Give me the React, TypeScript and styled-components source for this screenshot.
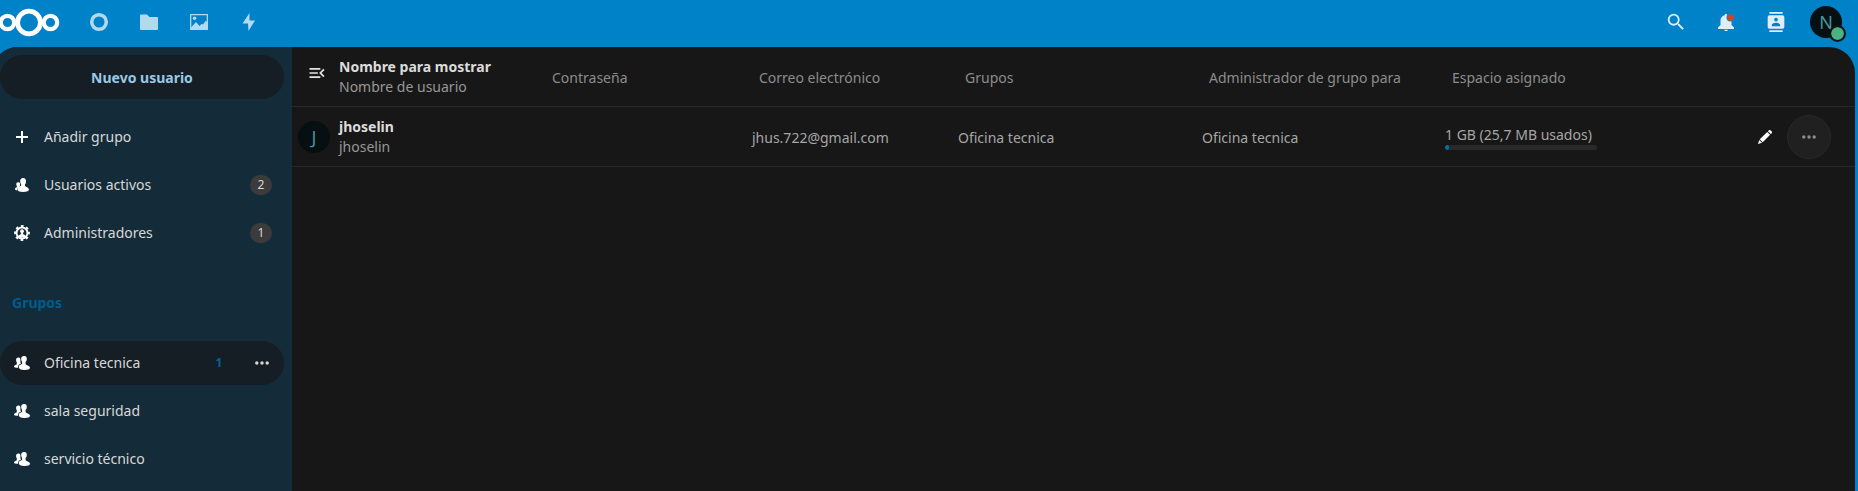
import React from 'react';
import styled, { createGlobalStyle } from 'styled-components';

const GlobalStyle = createGlobalStyle`
  *, *::before, *::after { box-sizing: border-box; }
  body {
    margin: 0;
    background: #0082c9;
    color: #d8d8d8;
    font: 14px/20px "Noto Sans", "Open Sans", sans-serif;
  }
  button { font: inherit; color: inherit; border: 0; padding: 0; background: none; cursor: pointer; }
  a { color: inherit; text-decoration: none; }
`;

const Page = styled.div`
  display: flex;
  flex-direction: column;
  min-height: 100vh;
`;

const Header = styled.header`
  display: flex;
  align-items: center;
  justify-content: space-between;
  padding: 0 7px 3px 0;
`;

const HeaderGroup = styled.nav`
  display: flex;
  align-items: center;
  height: 44px;
`;

const LogoLink = styled.a`
  display: flex;
  width: 74px;
`;

const AppLink = styled.a`
  display: flex;
  justify-content: center;
  width: 50px;
  opacity: 0.7;
`;

const HeaderButton = styled.button`
  display: flex;
  justify-content: center;
  width: 50px;
  color: #fff;
  opacity: 0.87;
`;

const AccountButton = styled.button`
  display: flex;
  justify-content: center;
  width: 50px;
`;

const Avatar = styled.span`
  position: relative;
  display: flex;
  align-items: center;
  justify-content: center;
  width: 32px;
  height: 32px;
  border-radius: 50%;
  background: #060f12;
  color: #4496a0;
  font-size: 18px;
`;

const Status = styled.span`
  position: absolute;
  right: -4px;
  bottom: -4px;
  width: 17px;
  height: 17px;
  border: 2px solid #141414;
  border-radius: 50%;
  background: #49b382;
  background-clip: padding-box;
`;

const Content = styled.div`
  display: flex;
  flex: 1;
  margin: 0 3px 0 -8px;
  border-radius: 26px 26px 0 0;
  overflow: hidden;
  background: #171717;
`;

const Sidebar = styled.aside`
  flex: none;
  width: 300px;
  padding: 8px;
  background: #142c39;
`;

const NewUser = styled.button`
  display: block;
  width: 284px;
  height: 44px;
  margin-bottom: 16px;
  padding-top: 2px;
  border-radius: 22px;
  background: #151e24;
  color: #99c9e6;
  font-weight: 700;
`;

const NavList = styled.ul`
  display: flex;
  flex-direction: column;
  gap: 4px;
  width: 284px;
  margin: 0;
  padding: 0;
  list-style: none;
`;

const NavItem = styled.li<{ $active?: boolean }>`
  display: flex;
  align-items: center;
  height: 44px;
  padding-right: 12px;
  border-radius: 22px;
  background: ${(p) => (p.$active ? '#151e24' : 'transparent')};
`;

const NavLink = styled.a`
  display: flex;
  flex: 1;
  align-items: center;
`;

const NavIcon = styled.span`
  display: flex;
  justify-content: center;
  width: 44px;
  color: #fff;
`;

const Badge = styled.span`
  width: 22px;
  border-radius: 10px;
  background: #3b3b3b;
  font-size: 12px;
  text-align: center;
`;

const ActiveCount = styled.span`
  width: 22px;
  color: #00639a;
  font-size: 12px;
  font-weight: 700;
  text-align: center;
`;

const ItemMenu = styled.button`
  display: flex;
  align-items: center;
  justify-content: center;
  width: 44px;
  height: 44px;
  margin: 0 -12px 0 10px;
`;

const GroupTitle = styled.h2`
  margin: 26px 0 16px;
  padding-left: 12px;
  color: #005b8f;
  font-size: 14px;
  line-height: 44px;
`;

const Main = styled.main`
  flex: 1;
  min-width: 0;
`;

const UserTable = styled.table`
  width: 100%;
  table-layout: fixed;
  border-collapse: separate;
  border-spacing: 0;
`;

const Col = styled.col<{ $width?: number }>`
  width: ${(p) => (p.$width ? `${p.$width}px` : 'auto')};
`;

const HeadCell = styled.th<{ $field?: boolean }>`
  height: 60px;
  padding: ${(p) => (p.$field ? '2px 0 0 7px' : '0')};
  border-bottom: 1px solid #292929;
  color: #8c8c8c;
  font-weight: 400;
  text-align: left;
  white-space: nowrap;
`;

const Cell = styled.td<{ $field?: boolean }>`
  height: 60px;
  padding: ${(p) => (p.$field ? '2px 0 0' : '0')};
  border-bottom: 1px solid #292929;
  color: #a6a6a6;
  white-space: nowrap;
`;

const Strong = styled.strong`
  display: block;
  color: #dcdcdc;
`;

const Muted = styled.span`
  display: block;
  color: #989898;
`;

const CollapseButton = styled.button`
  display: flex;
  justify-content: center;
  width: 44px;
  height: 28px;
  margin-left: 3px;
  color: #e4e4e4;
`;

const AvatarBox = styled.div`
  padding-left: 6px;
`;

const QuotaLabel = styled.label`
  display: block;
`;

const Quota = styled.progress`
  display: block;
  width: 152px;
  height: 5px;
  border: 0;
  border-radius: 3px;
  overflow: hidden;
  appearance: none;
  background: #292929;
  &::-webkit-progress-bar { background: #292929; }
  &::-webkit-progress-value { background: #0070ad; border-radius: 3px; }
`;

const Actions = styled.div`
  display: flex;
  justify-content: flex-end;
  padding-right: 24px;
`;

const RoundButton = styled.button<{ $filled?: boolean }>`
  display: flex;
  align-items: center;
  justify-content: center;
  width: 44px;
  height: 44px;
  border: 1px solid ${(p) => (p.$filled ? '#292929' : 'transparent')};
  border-radius: 50%;
  background: ${(p) => (p.$filled ? '#202020' : 'transparent')};
  color: ${(p) => (p.$filled ? '#8c8c8c' : '#fff')};
`;

type IconProps = { d: string; size?: number };
const Icon = ({ d, size = 20 }: IconProps) => (
  <svg width={size} height={size} viewBox="0 0 24 24" fill="currentColor" aria-hidden="true">
    <path fillRule="evenodd" d={d} />
  </svg>
);

const icons = {
  search:
    'M9.5,3A6.5,6.5 0 0,1 16,9.5C16,11.11 15.41,12.59 14.44,13.73L14.71,14H15.5L20.5,19L19,20.5L14,15.5V14.71L13.73,14.44C12.59,15.41 11.11,16 9.5,16A6.5,6.5 0 0,1 3,9.5A6.5,6.5 0 0,1 9.5,3M9.5,5C7,5 5,7 5,9.5C5,12 7,14 9.5,14C12,14 14,12 14,9.5C14,7 12,5 9.5,5Z',
  contacts:
    'M20,0H4V2H20V0M4,24H20V22H4V24M20,4H4A2,2 0 0,0 2,6V18A2,2 0 0,0 4,20H20A2,2 0 0,0 22,18V6A2,2 0 0,0 20,4M12,6.75A2.25,2.25 0 0,1 14.25,9A2.25,2.25 0 0,1 12,11.25A2.25,2.25 0 0,1 9.75,9A2.25,2.25 0 0,1 12,6.75M17,17H7V15.5C7,13.83 10.33,13 12,13C13.67,13 17,13.83 17,15.5V17Z',
  collapse:
    'M21,15.61L19.59,17L14.58,12L19.59,7L21,8.39L17.44,12L21,15.61M3,6H16V8H3V6M3,13V11H13V13H3M3,18V16H16V18H3Z',
};

const Logo = () => (
  <svg width="60" height="30" viewBox="0 0 60 30" fill="none" stroke="#fff" role="img" aria-label="Nextcloud">
    <circle cx="7.5" cy="15.5" r="6.7" strokeWidth="4.2" />
    <circle cx="29" cy="15.5" r="11.4" strokeWidth="4.8" />
    <circle cx="50.500" cy="15.5" r="6.7" strokeWidth="4.2" />
  </svg>
);

const DashboardIcon = () => (
  <svg width="20" height="20" viewBox="0 0 20 20" fill="none" stroke="#fff" strokeWidth="3.5" aria-hidden="true">
    <circle cx="10" cy="10" r="7.300" />
  </svg>
);

const FolderIcon = () => (
  <svg width="20" height="20" viewBox="0 0 20 20" fill="#fff" aria-hidden="true">
    <path d="M2 2.500h6l2.500 2.500H18a1 1 0 0 1 1 1v11a1 1 0 0 1-1 1H2a1 1 0 0 1-1-1V3.500a1 1 0 0 1 1-1z" />
  </svg>
);

const PhotosIcon = () => (
  <svg width="20" height="20" viewBox="0 0 20 20" fill="#fff" aria-hidden="true">
    <path fillRule="evenodd" d="M1.600 2h16.800q.6 0 .6.600v14.800q0 .6-.6.600H1.600q-.6 0-.6-.600V2.600q0-.6.6-.600zM2.300 3.300v13.400h15.400V3.300z" />
    <path d="M2 15.500L7 10l3.500 4 2-2 1.500.5 3-4 1.300 2.500V17H2z" />
    <circle cx="5.600" cy="6.300" r="1.800" />
  </svg>
);

const BoltIcon = () => (
  <svg width="20" height="20" viewBox="0 0 20 20" fill="#fff" aria-hidden="true">
    <path d="M10.500 1L3.500 11.500H9L9.500 19L16 8.500H10.500z" />
  </svg>
);

const BellIcon = () => (
  <svg width="20" height="20" viewBox="0 0 20 20" aria-hidden="true">
    <path
      fill="#fff"
      d="M10 2c-.9 0-1.300.6-1.400 1.300C6 4 4.500 6 4.500 8.500v4.500L2 15.500V17h16v-1.500L15.500 13V8.500C15.500 6 14 4 11.400 3.300 11.300 2.600 10.900 2 10 2zM8 17.700c.3 1.800 3.700 1.800 4 0z"
    />
    <circle cx="14.500" cy="5.500" r="4" fill="#0b84c6" />
    <circle cx="14.500" cy="5.500" r="3.200" fill="#f03c00" />
  </svg>
);

const PlusIcon = () => (
  <svg width="16" height="16" viewBox="0 0 16 16" fill="currentColor" aria-hidden="true">
    <path d="M7 2h2v5h5v2H9v5H7V9H2V7h5z" />
  </svg>
);

const UserIcon = () => (
  <svg width="16" height="16" viewBox="0 0 16 16" fill="currentColor" aria-hidden="true">
    <path d="M9.200 1C7 1 6.200 2.500 6.200 4.200c0 1.600.5 2.300.9 3v1.600c-1 .7-3.800 1.200-3.800 3.200 0 2 2 3 5.800 3S15 14 15 12.800c0-1.900-2.700-2.800-4-3.800V7.200c.8-.8 1-1.700 1-3C12 2.500 11.300 1 9.200 1z" />
    <path d="M4.200 5.200C2.800 5.200 2.200 6 2.300 7.400c0 .8.300 1.300.6 1.700v.9C2.300 10.600 1 10.900 1 12c0 .8.800 1.200 2 1.300 0-2.300 1-3 3-4V6.200c-.4-.7-.9-1-1.800-1z" />
  </svg>
);

const GroupIcon = () => (
  <svg width="16" height="16" viewBox="0 0 16 16" fill="currentColor" aria-hidden="true">
    <path d="M10.200 1C8 1 7.100 2.200 7.200 4c0 1.500.4 2.200.9 2.900v2c-1.300.8-3.400 1.100-3.400 2.900 0 2.200 2.200 3.200 5.600 3.200 3.500 0 5.700-.8 5.700-2.200 0-2-3-2.400-4.400-3.600V6.900c.8-.7 1.200-1.500 1.200-2.900 0-1.700-.7-3-2.600-3z" />
    <path d="M4.300 2.500C2.700 2.500 2 3.500 2.100 5.200c0 1 .3 1.600.7 2.100v1.900C1.800 10 0 10.200 0 11.500c0 .9 1.200 1.200 4 1.300-.1-2.300.9-3.300 3.100-4.200l-.7-1.400V3.700c-.4-.8-1.100-1.200-2.100-1.200z" />
  </svg>
);

const AdminIcon = () => (
  <svg width="16" height="16" viewBox="0 0 16 16" aria-hidden="true">
    <circle cx="8" cy="8" r="5.500" fill="none" stroke="currentColor" strokeWidth="2" />
    <circle cx="8" cy="8" r="6.800" fill="none" stroke="currentColor" strokeWidth="2.200" strokeDasharray="2.670 2.670" strokeDashoffset="1.330" />
    <circle cx="8" cy="6.200" r="1.900" fill="currentColor" />
    <path d="M7 7h2v2l2.500 1.500v2h-7v-2L7 9z" fill="currentColor" />
  </svg>
);

const PencilIcon = () => (
  <svg width="16" height="16" viewBox="0 0 16 16" fill="currentColor" aria-hidden="true">
    <path d="M12.700 1c-.4 0-.8.200-1.100.500l-.700.700 2.900 2.900.700-.700c.7-.7.700-1.500 0-2.200l-.700-.700c-.3-.3-.7-.5-1.100-.5zM10.200 2.900L2.800 10.300l2.900 2.900 7.400-7.400zM2.200 11L1 15l4-1.200z" />
  </svg>
);

const DotsIcon = () => (
  <svg width="16" height="16" viewBox="0 0 16 16" fill="currentColor" aria-hidden="true">
    <circle cx="2.800" cy="8" r="1.700" />
    <circle cx="8" cy="8" r="1.700" />
    <circle cx="13.200" cy="8" r="1.700" />
  </svg>
);

const apps = [
  { label: 'Panel', icon: <DashboardIcon /> },
  { label: 'Archivos', icon: <FolderIcon /> },
  { label: 'Fotos', icon: <PhotosIcon /> },
  { label: 'Actividad', icon: <BoltIcon /> },
];

const filters = [
  { label: 'Añadir grupo', icon: <PlusIcon /> },
  { label: 'Usuarios activos', icon: <UserIcon />, count: 2 },
  { label: 'Administradores', icon: <AdminIcon />, count: 1 },
];

const groups = [
  { label: 'Oficina tecnica', count: 1, active: true },
  { label: 'sala seguridad' },
  { label: 'servicio técnico' },
];

const users = [
  {
    id: 'jhoselin',
    name: 'jhoselin',
    email: 'jhus.722@gmail.com',
    groups: 'Oficina tecnica',
    adminFor: 'Oficina tecnica',
    quota: '1 GB (25,7 MB usados)',
    used: 26,
  },
];

export default function App() {
  return (
    <Page>
      <GlobalStyle />
      <Header>
        <HeaderGroup>
          <LogoLink href="#"><Logo /></LogoLink>
          {apps.map((app) => (
            <AppLink key={app.label} href="#" aria-label={app.label}>{app.icon}</AppLink>
          ))}
        </HeaderGroup>
        <HeaderGroup>
          <HeaderButton aria-label="Buscar"><Icon d={icons.search} size={22} /></HeaderButton>
          <HeaderButton aria-label="Notificaciones"><BellIcon /></HeaderButton>
          <HeaderButton aria-label="Contactos"><Icon d={icons.contacts} /></HeaderButton>
          <AccountButton aria-label="Cuenta">
            <Avatar>N<Status /></Avatar>
          </AccountButton>
        </HeaderGroup>
      </Header>
      <Content>
        <Sidebar>
          <NewUser>Nuevo usuario</NewUser>
          <NavList>
            {filters.map((f) => (
              <NavItem key={f.label}>
                <NavLink href="#"><NavIcon>{f.icon}</NavIcon>{f.label}</NavLink>
                {f.count && <Badge>{f.count}</Badge>}
              </NavItem>
            ))}
          </NavList>
          <GroupTitle>Grupos</GroupTitle>
          <NavList>
            {groups.map((g) => (
              <NavItem key={g.label} $active={g.active}>
                <NavLink href="#"><NavIcon><GroupIcon /></NavIcon>{g.label}</NavLink>
                {g.active && (
                  <>
                    <ActiveCount>{g.count}</ActiveCount>
                    <ItemMenu aria-label="Acciones"><DotsIcon /></ItemMenu>
                  </>
                )}
              </NavItem>
            ))}
          </NavList>
        </Sidebar>
        <Main>
          <UserTable>
            <colgroup>
              <Col $width={47} />
              <Col $width={206} />
              <Col $width={207} />
              <Col $width={206} />
              <Col $width={244} />
              <Col $width={243} />
              <Col />
              <Col $width={180} />
            </colgroup>
            <thead>
              <tr>
                <HeadCell>
                  <CollapseButton aria-label="Contraer navegación"><Icon d={icons.collapse} /></CollapseButton>
                </HeadCell>
                <HeadCell scope="col">
                  <Strong>Nombre para mostrar</Strong>
                  <Muted>Nombre de usuario</Muted>
                </HeadCell>
                <HeadCell scope="col" $field>Contraseña</HeadCell>
                <HeadCell scope="col" $field>Correo electrónico</HeadCell>
                <HeadCell scope="col" $field>Grupos</HeadCell>
                <HeadCell scope="col" $field>Administrador de grupo para</HeadCell>
                <HeadCell scope="col" $field>Espacio asignado</HeadCell>
                <HeadCell />
              </tr>
            </thead>
            <tbody>
              {users.map((u) => (
                <tr key={u.id}>
                  <Cell><AvatarBox><Avatar>J</Avatar></AvatarBox></Cell>
                  <Cell><Strong>{u.name}</Strong><Muted>{u.id}</Muted></Cell>
                  <Cell $field />
                  <Cell $field>{u.email}</Cell>
                  <Cell $field>{u.groups}</Cell>
                  <Cell $field>{u.adminFor}</Cell>
                  <Cell $field>
                    <QuotaLabel htmlFor={`quota-${u.id}`}>{u.quota}</QuotaLabel>
                    <Quota id={`quota-${u.id}`} value={u.used} max={1000} />
                  </Cell>
                  <Cell>
                    <Actions>
                      <RoundButton aria-label="Editar"><PencilIcon /></RoundButton>
                      <RoundButton $filled aria-label="Más acciones"><DotsIcon /></RoundButton>
                    </Actions>
                  </Cell>
                </tr>
              ))}
            </tbody>
          </UserTable>
        </Main>
      </Content>
    </Page>
  );
}
